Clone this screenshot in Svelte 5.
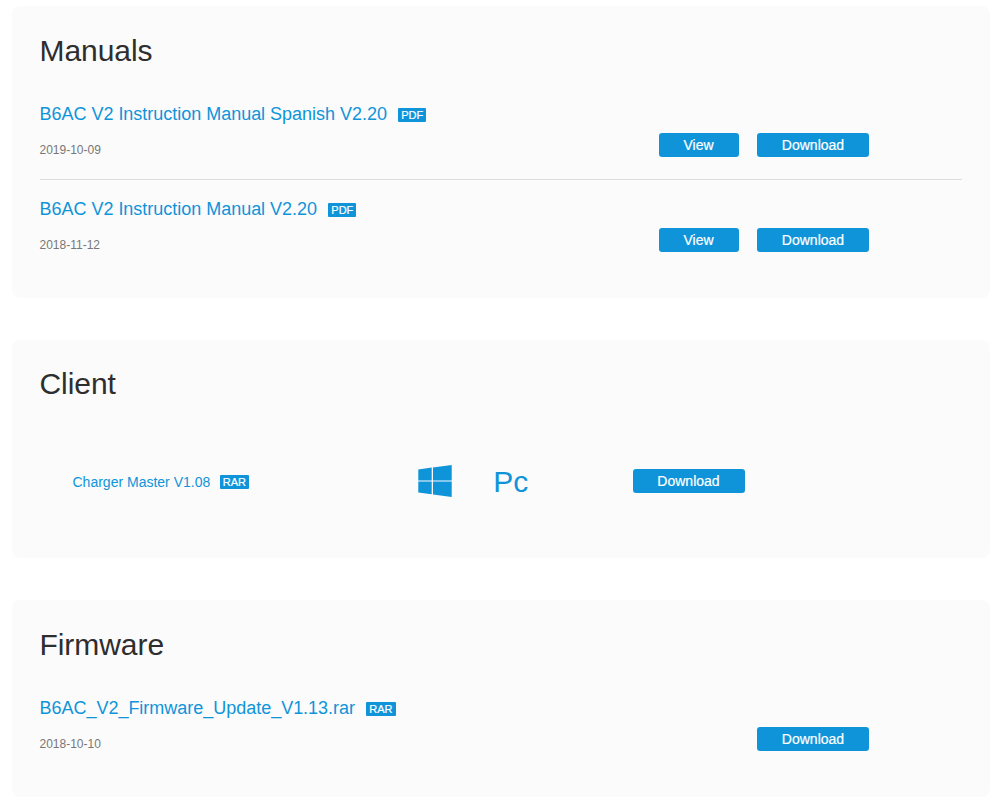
<script lang="ts">
  const manuals = [
    { name: "B6AC V2 Instruction Manual Spanish V2.20", type: "PDF", date: "2019-10-09" },
    { name: "B6AC V2 Instruction Manual V2.20", type: "PDF", date: "2018-11-12" },
  ];

  const firmware = [
    { name: "B6AC_V2_Firmware_Update_V1.13.rar", type: "RAR", date: "2018-10-10" },
  ];
</script>

<main>
  <section class="card manuals">
    <h2>Manuals</h2>
    {#each manuals as item}
      <div class="row">
        <div class="info">
          <p class="name">{item.name}<span class="badge">{item.type}</span></p>
          <p class="date">{item.date}</p>
        </div>
        <div class="actions">
          <button class="view">View</button>
          <button>Download</button>
        </div>
      </div>
    {/each}
  </section>

  <section class="card client">
    <h2>Client</h2>
    <div class="client-row">
      <p class="client-name">Charger Master V1.08<span class="badge">RAR</span></p>
      <div class="platform">
        <svg width="34" height="32" viewBox="0 0 34 32" fill="currentColor">
          <path d="M0.3 4.6 13.7 2.6V15.4H0.3zM15 2.4 33.7 0V15.4H15zM0.3 16.6H13.7V29.2L0.3 27.4zM15 16.6H33.7V32L15 29.4z" />
        </svg>
        <span>Pc</span>
      </div>
      <button>Download</button>
    </div>
  </section>

  <section class="card firmware">
    <h2>Firmware</h2>
    {#each firmware as item}
      <div class="row">
        <div class="info">
          <p class="name">{item.name}<span class="badge">{item.type}</span></p>
          <p class="date">{item.date}</p>
        </div>
        <div class="actions">
          <button>Download</button>
        </div>
      </div>
    {/each}
  </section>
</main>

<style>
  :global(body) {
    margin: 0;
    background: #fff;
  }

  main {
    display: flex;
    flex-direction: column;
    gap: 42px;
    padding: 6px 10px 0 12px;
    font-family: "Liberation Sans", Arial, sans-serif;
    color: #0f94d9;
  }

  .card {
    box-sizing: border-box;
    padding: 28px 28px 0 27.5px;
    border-radius: 8px;
    background: #fbfbfb;
  }

  .manuals {
    height: 292px;
  }

  .client {
    height: 218px;
    padding-top: 27px;
  }

  .firmware {
    height: 197px;
  }

  h2 {
    margin: 0;
    font-size: 30px;
    line-height: 34px;
    font-weight: 400;
    letter-spacing: -0.06px;
    color: #2e2e2e;
  }

  p {
    margin: 0;
  }

  .manuals h2,
  .firmware h2 {
    margin-bottom: 15.6px;
  }

  .row {
    display: flex;
    justify-content: space-between;
    box-sizing: border-box;
    height: 95.6px;
    padding-top: 19px;
    padding-right: 93px;
  }

  .row + .row {
    padding-top: 18px;
    border-top: 1px solid #dcdcdc;
  }

  .name {
    display: flex;
    align-items: center;
    font-size: 18px;
    line-height: 22px;
    letter-spacing: -0.02px;
  }

  .name .badge {
    margin: 2.6px 0 0 11.3px;
  }

  .date {
    margin-top: 17px;
    font-size: 12px;
    line-height: 16px;
    color: #777;
  }

  .badge {
    padding: 0 3px;
    border-radius: 1px;
    background: #0f94d9;
    color: #fff;
    font-size: 11px;
    line-height: 14px;
    letter-spacing: 0;
    -webkit-text-stroke: 0.2px #fff;
  }

  .actions {
    display: flex;
    gap: 18.5px;
    margin-top: 30px;
  }

  button {
    width: 112px;
    height: 24px;
    padding: 0;
    border: none;
    border-radius: 3px;
    background: #0f94d9;
    color: #fff;
    font-family: inherit;
    font-size: 14px;
    line-height: 24px;
    -webkit-text-stroke: 0.2px #fff;
  }

  .view {
    width: 80px;
  }

  .client-row {
    display: grid;
    grid-template-columns: 345.5px 214.5px 112px;
    align-items: center;
    height: 36px;
    margin-top: 62px;
    padding-left: 33px;
  }

  .client-name {
    display: flex;
    align-items: center;
    padding-top: 2px;
    font-size: 14px;
    line-height: 16px;
  }

  .client-name .badge {
    margin-left: 9.5px;
  }

  .platform {
    display: flex;
    align-items: center;
    gap: 41.2px;
    font-size: 30px;
    line-height: 34px;
  }

  .platform span {
    padding-top: 1px;
  }
</style>
